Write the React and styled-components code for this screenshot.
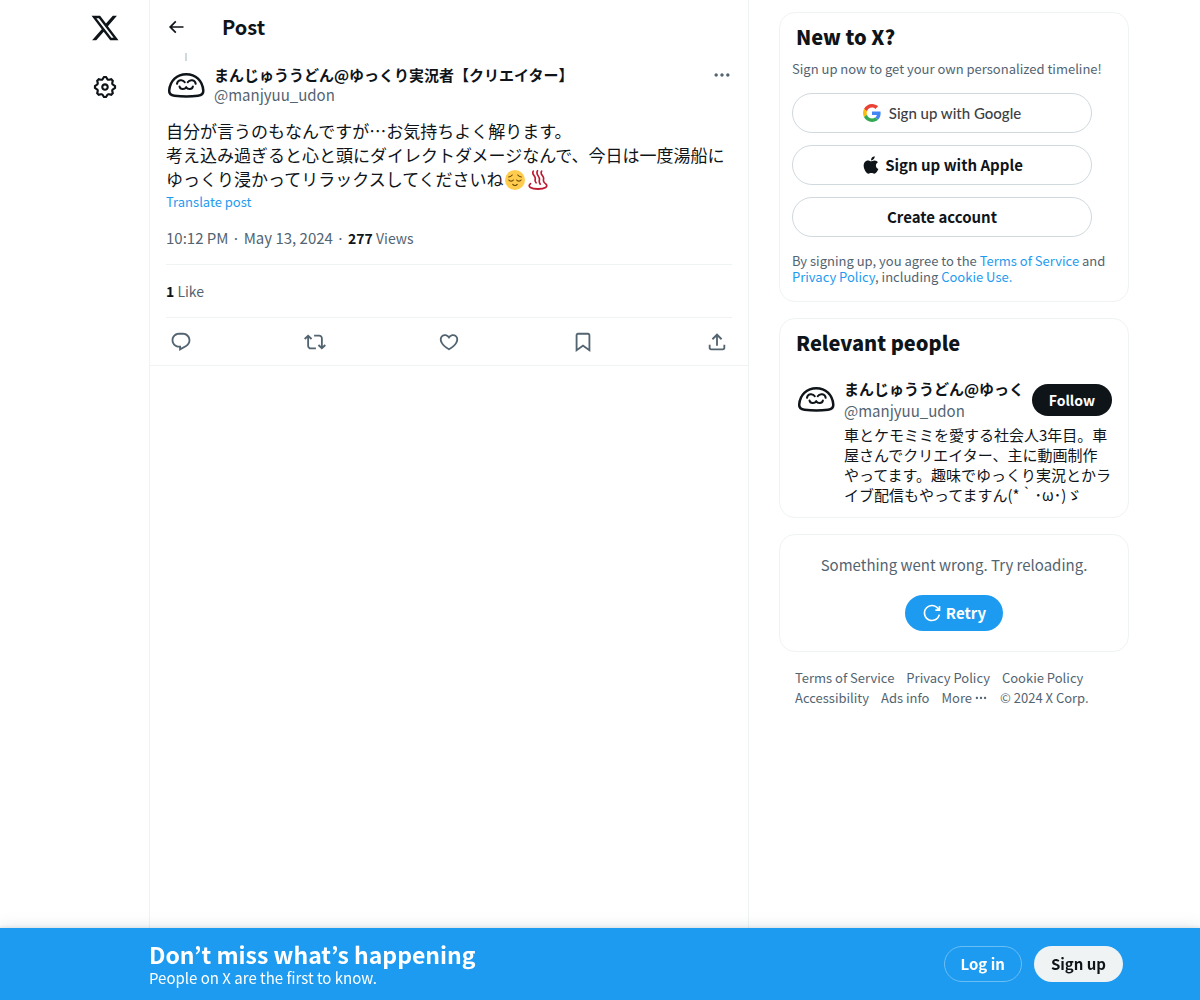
import React from "react";
import styled, { createGlobalStyle } from "styled-components";
import { FaApple } from "react-icons/fa";

const GlobalStyle = createGlobalStyle`
  * {
    box-sizing: border-box;
  }
  body {
    margin: 0;
    background-color: #fff;
    font-family: "Noto Sans CJK JP", "Noto Sans", sans-serif;
    font-size: 15px;
    line-height: 20px;
    color: #0f1419;
  }
  h1, h2, p, ul {
    margin: 0;
    padding: 0;
  }
  button {
    font-family: inherit;
    cursor: pointer;
  }
`;

const Page = styled.div`
  display: flex;
  max-width: 1058px;
  min-height: 100vh;
  margin: 0 auto;
`;

const SideNav = styled.nav`
  display: flex;
  flex-direction: column;
  align-items: center;
  gap: 9px;
  flex: 0 0 78px;
  padding: 3px 10px 0 0;
`;

const NavLink = styled.a`
  display: flex;
  align-items: center;
  justify-content: center;
  width: 50px;
  height: 50px;
  color: #0f1419;
`;

const Icon = styled.svg`
  display: block;
  flex: none;
  width: ${({ $size }) => $size}px;
  height: ${({ $size }) => $size}px;
  fill: currentColor;
`;

const Main = styled.main`
  flex: 0 1 600px;
  min-width: 0;
  border: solid #eff3f4;
  border-width: 0 1px;
`;

const Header = styled.header`
  display: flex;
  align-items: center;
  gap: 36px;
  height: 53px;
  padding: 0 16px;
`;

const PageTitle = styled.h1`
  font-size: 20px;
  line-height: 24px;
`;

const IconButton = styled.button`
  display: flex;
  align-items: center;
  justify-content: center;
  padding: 0;
  border: 0;
  background: none;
  color: ${({ $color }) => $color || "#536471"};
`;

const Post = styled.article`
  padding: 0 16px;
  border-bottom: 1px solid #eff3f4;
`;

const ThreadLine = styled.div`
  width: 2px;
  height: 8px;
  margin: 0 0 4px 19px;
  background-color: #cfd9de;
`;

const Author = styled.div`
  display: flex;
  align-items: flex-start;
  gap: 8px;
`;

const AuthorNames = styled.div`
  display: flex;
  flex-direction: column;
  gap: ${({ $gap }) => $gap || 0}px;
  flex: 1;
  min-width: 0;
`;

const Name = styled.a`
  overflow: hidden;
  color: #0f1419;
  font-weight: 700;
  text-decoration: none;
  white-space: nowrap;
`;

const Handle = styled.div`
  color: #536471;
`;

const PostText = styled.p`
  margin-top: 14px;
  font-size: 17px;
  line-height: 24px;
`;

const Emoji = styled.svg`
  width: 20px;
  height: 20px;
  margin: 0 2px 0 1px;
  vertical-align: -4px;
`;

const Translate = styled.button`
  display: block;
  margin-top: 1px;
  padding: 0;
  border: 0;
  background: none;
  color: #1d9bf0;
  font-size: 13px;
  line-height: 20px;
`;

const Meta = styled.div`
  padding: 16px 0;
  color: #536471;
`;

const Stats = styled(Meta)`
  border: solid #eff3f4;
  border-width: 1px 0;
`;

const Count = styled.span`
  font-size: 14px;

  strong {
    color: #0f1419;
  }
`;

const Actions = styled.div`
  display: flex;
  align-items: center;
  justify-content: space-between;
  height: 47px;
  padding: 0 4px;
`;

const Aside = styled.aside`
  flex: 0 1 350px;
  min-width: 0;
  margin-left: 30px;
  padding: 12px 0 90px;
`;

const Card = styled.section`
  margin-bottom: 16px;
  padding: ${({ $pad }) => $pad || "12px"};
  border: 1px solid #eff3f4;
  border-radius: 16px;
`;

const CardTitle = styled.h2`
  padding: 0 4px;
  font-size: 20px;
  font-weight: 900;
  line-height: 24px;
`;

const SmallText = styled.p`
  color: #536471;
  font-size: 13px;
  line-height: 16px;
`;

const Intro = styled(SmallText)`
  margin-top: 12px;
`;

const Link = styled.a`
  color: #1d9bf0;
  text-decoration: none;
`;

const SignUpOptions = styled.div`
  display: flex;
  flex-direction: column;
  gap: 12px;
  max-width: 300px;
  margin: 16px 0;
`;

const Pill = styled.button`
  display: flex;
  align-items: center;
  justify-content: center;
  gap: 4px;
  flex: none;
  height: ${({ $height }) => $height || 36}px;
  padding: 0 16px;
  border: 1px solid ${({ $border }) => $border || "transparent"};
  border-radius: 20px;
  background-color: ${({ $bg }) => $bg || "#fff"};
  color: ${({ $color }) => $color || "#0f1419"};
  font-size: 15px;
  font-weight: 700;
  line-height: 20px;
  white-space: nowrap;
`;

const GooglePill = styled(Pill)`
  gap: 8px;
  color: #3c4043;
  font-family: Lato, sans-serif;
  font-size: 15px;
  font-weight: 500;
`;

const FollowPill = styled(Pill)`
  font-size: 14px;
`;

const Person = styled.div`
  display: flex;
  align-items: flex-start;
  gap: 8px;
  margin-top: 24px;
  padding: 0 4px;
`;

const PersonBody = styled.div`
  flex: 1;
  min-width: 0;
`;

const PersonTop = styled.div`
  display: flex;
  align-items: center;
  justify-content: space-between;
  gap: 8px;
`;

const Bio = styled.p`
  margin-top: 4px;
`;

const ErrorBox = styled.div`
  display: flex;
  flex-direction: column;
  align-items: center;
  gap: 20px;
  color: #536471;
`;

const FooterLinks = styled.nav`
  display: flex;
  flex-wrap: wrap;
  column-gap: 12px;
  padding: 0 16px;
  color: #536471;
  font-size: 13px;
  line-height: 20px;

  a {
    color: inherit;
    text-decoration: none;
  }
`;

const MoreLink = styled.button`
  display: flex;
  align-items: center;
  gap: 2px;
  padding: 0;
  border: 0;
  background: none;
  color: inherit;
  font-size: 13px;
  line-height: 20px;
`;

const BottomBar = styled.div`
  position: fixed;
  right: 0;
  bottom: 0;
  left: 0;
  background-color: #1d9bf0;
  box-shadow: 0 0 15px rgba(101, 119, 134, 0.2), 0 0 3px 1px rgba(101, 119, 134, 0.15);
`;

const BottomInner = styled.div`
  display: flex;
  align-items: center;
  justify-content: space-between;
  max-width: 1058px;
  height: 72px;
  margin: 0 auto;
  padding: 0 6px 0 78px;
  color: #fff;
`;

const BottomTitle = styled.div`
  font-size: 23px;
  font-weight: 700;
  line-height: 28px;
`;

const BottomButtons = styled.div`
  display: flex;
  gap: 12px;
`;

const paths = {
  logo: "M18.244 2.25h3.308l-7.227 8.26 8.502 11.24H16.17l-5.214-6.817L4.99 21.75H1.68l7.73-8.835L1.254 2.25H8.08l4.713 6.231zm-1.161 17.52h1.833L7.084 4.126H5.117z",
  settings: "M10.54 1.75h2.92l1.57 2.36c.11.17.32.25.53.21l2.53-.59 2.17 2.17-.58 2.54c-.05.2.04.41.21.53l2.36 1.57v2.92l-2.36 1.57c-.17.12-.26.33-.21.53l.58 2.54-2.17 2.17-2.53-.59c-.21-.04-.42.04-.53.21l-1.57 2.36h-2.92l-1.58-2.36c-.11-.17-.32-.25-.52-.21l-2.54.59-2.17-2.17.58-2.54c.05-.2-.03-.41-.21-.53l-2.35-1.57v-2.92L4.1 8.97c.18-.12.26-.33.21-.53L3.73 5.9 5.9 3.73l2.54.59c.2.04.41-.04.52-.21l1.58-2.36zm1.07 2l-.98 1.47C10.05 6.08 9 6.5 7.99 6.27l-1.46-.34-.6.6.33 1.46c.24 1.01-.18 2.07-1.05 2.64l-1.46.98v.78l1.46.98c.87.57 1.29 1.63 1.05 2.64l-.33 1.46.6.6 1.46-.34c1.01-.23 2.06.19 2.64 1.05l.98 1.47h.78l.97-1.47c.58-.86 1.63-1.28 2.65-1.05l1.45.34.61-.6-.34-1.46c-.23-1.01.18-2.07 1.05-2.64l1.47-.98v-.78l-1.47-.98c-.87-.57-1.28-1.63-1.05-2.64l.34-1.46-.61-.6-1.45.34c-1.02.23-2.07-.19-2.65-1.05l-.97-1.47h-.78zM12 10.5c-.83 0-1.5.67-1.5 1.5s.67 1.5 1.5 1.5c.82 0 1.5-.67 1.5-1.5s-.68-1.5-1.5-1.5zM8.5 12c0-1.93 1.56-3.5 3.5-3.5 1.93 0 3.5 1.57 3.5 3.5s-1.57 3.5-3.5 3.5c-1.94 0-3.5-1.57-3.5-3.5z",
  back: "M7.414 13l5.043 5.04-1.414 1.42L3.586 12l7.457-7.46 1.414 1.42L7.414 11H21v2H7.414z",
  more: "M3 12c0-1.1.9-2 2-2s2 .9 2 2-.9 2-2 2-2-.9-2-2zm9 2c1.1 0 2-.9 2-2s-.9-2-2-2-2 .9-2 2 .9 2 2 2zm7 0c1.1 0 2-.9 2-2s-.9-2-2-2-2 .9-2 2 .9 2 2 2z",
  reply: "M1.751 10c0-4.42 3.584-8 8.005-8h4.366c4.49 0 8.129 3.64 8.129 8.13 0 2.96-1.607 5.68-4.196 7.11l-8.054 4.46v-3.69h-.067c-4.49.1-8.183-3.51-8.183-8.01zm8.005-6c-3.317 0-6.005 2.69-6.005 6 0 3.37 2.77 6.08 6.138 6.01l.351-.01h1.761v2.3l5.087-2.81c1.951-1.08 3.163-3.13 3.163-5.36 0-3.39-2.744-6.13-6.129-6.13H9.756z",
  repost: "M4.5 3.88l4.432 4.14-1.364 1.46L5.5 7.55V16c0 1.1.896 2 2 2H13v2H7.5c-2.209 0-4-1.79-4-4V7.55L1.432 9.48.068 8.02 4.5 3.88zM16.5 6H11V4h5.5c2.209 0 4 1.79 4 4v8.45l2.068-1.93 1.364 1.46-4.432 4.14-4.432-4.14 1.364-1.46 2.068 1.93V8c0-1.1-.896-2-2-2z",
  like: "M16.697 5.5c-1.222-.06-2.679.51-3.89 2.16l-.805 1.09-.806-1.09C9.984 6.01 8.526 5.44 7.304 5.5c-1.243.07-2.349.78-2.91 1.91-.552 1.12-.633 2.78.479 4.82 1.074 1.97 3.257 4.27 7.129 6.61 3.87-2.34 6.052-4.64 7.126-6.61 1.111-2.04 1.03-3.7.477-4.82-.561-1.13-1.666-1.84-2.908-1.91zm4.187 7.69c-1.351 2.48-4.001 5.12-8.379 7.67l-.503.3-.504-.3c-4.379-2.55-7.029-5.19-8.382-7.67-1.36-2.5-1.41-4.86-.514-6.67.887-1.79 2.647-2.91 4.601-3.01 1.651-.09 3.368.56 4.798 2.01 1.429-1.45 3.146-2.1 4.796-2.01 1.954.1 3.714 1.22 4.601 3.01.896 1.81.846 4.17-.514 6.67z",
  bookmark: "M4 4.5C4 3.12 5.119 2 6.5 2h11C18.881 2 20 3.12 20 4.5v18.44l-8-5.71-8 5.71V4.5zM6.5 4c-.276 0-.5.22-.5.5v14.56l6-4.29 6 4.29V4.5c0-.28-.224-.5-.5-.5h-11z",
  share: "M12 2.59l5.7 5.7-1.41 1.42L13 6.41V16h-2V6.41l-3.3 3.3-1.41-1.42L12 2.59zM21 15l-.02 3.51c0 1.38-1.12 2.49-2.5 2.49H5.5C4.11 21 3 19.88 3 18.5V15h2v3.5c0 .28.22.5.5.5h12.98c.28 0 .5-.22.5-.5L19 15h2z",
  retry: "M12 4c-4.418 0-8 3.58-8 8s3.582 8 8 8c3.806 0 6.993-2.66 7.802-6.22l1.95.44C20.742 18.67 16.76 22 12 22 6.477 22 2 17.52 2 12S6.477 2 12 2c3.272 0 6.176 1.57 8 4V3.500h2v6h-6v-2h2.616C17.175 5.390 14.749 4 12 4z",
};

const Glyph = ({ name, size }) => (
  <Icon $size={size} viewBox="0 0 24 24" aria-hidden="true">
    <path d={paths[name]} />
  </Icon>
);

const Avatar = () => (
  <Icon $size={40} viewBox="0 0 40 40" role="img" aria-label="まんじゅううどん">
    <g fill="none" stroke="#0f1419" strokeLinecap="round" strokeLinejoin="round">
      <path strokeWidth="2.500" d="M3.200 25.500C4 15.500 11 9.200 20.300 9.200S36.500 15.500 37.300 25.500c.2 3.400-1.800 4.800-5.300 5.200-7.500 1-15.500 1-23.500 0-3.500-.4-5.500-1.800-5.300-5.200z" />
      <path strokeWidth="2" d="M11 18.800c.5-4.200 5.800-4.800 7.800-1.600M21.700 17.200c2-3.200 7.500-2.600 8 1.600" />
      <path strokeWidth="2" d="M13.500 21.500c.8 3.300 5.200 3.400 6.700.6 1.500 2.800 5.900 2.700 6.700-.6" />
    </g>
  </Icon>
);

const GoogleLogo = () => (
  <Icon $size={18} viewBox="0 0 48 48" aria-hidden="true">
    <path fill="#EA4335" d="M24 9.500c3.540 0 6.710 1.220 9.210 3.600l6.850-6.850C35.900 2.380 30.470 0 24 0 14.620 0 6.510 5.380 2.560 13.220l7.980 6.190C12.430 13.720 17.740 9.500 24 9.500z" />
    <path fill="#4285F4" d="M46.980 24.550c0-1.570-.15-3.090-.38-4.550H24v9.020h12.940c-.58 2.960-2.260 5.480-4.780 7.180l7.730 6c4.510-4.180 7.090-10.360 7.090-17.650z" />
    <path fill="#FBBC05" d="M10.530 28.590c-.48-1.450-.76-2.990-.76-4.590s.27-3.140.76-4.590l-7.980-6.190C.92 16.460 0 20.120 0 24c0 3.880.92 7.540 2.560 10.780l7.970-6.190z" />
    <path fill="#34A853" d="M24 48c6.480 0 11.930-2.130 15.890-5.810l-7.730-6c-2.150 1.450-4.920 2.300-8.160 2.300-6.260 0-11.570-4.220-13.470-9.910l-7.980 6.190C6.510 42.620 14.620 48 24 48z" />
  </Icon>
);

const RelievedFace = () => (
  <Emoji viewBox="0 0 36 36" role="img" aria-label="relieved face">
    <circle cx="18" cy="18" r="18" fill="#ffcc4d" />
    <g fill="none" stroke="#664500" strokeWidth="2" strokeLinecap="round">
      <path d="M7 18c1.500 2.800 6.500 2.800 8 0M21 18c1.500 2.800 6.500 2.800 8 0" />
      <path d="M6.500 12.500c2.500-.3 5-1.600 6.500-3.500M29.500 12.500c-2.500-.3-5-1.600-6.500-3.500" />
      <path d="M14 26c2 2.600 6 2.600 8 0" />
    </g>
  </Emoji>
);

const HotSprings = () => (
  <Emoji viewBox="0 0 36 36" role="img" aria-label="hot springs">
    <g fill="none" stroke="#be1931" strokeLinecap="round">
      <path strokeWidth="3" d="M9.500 2c-4 6.500 5 8.500 3.500 14.500-.6 2.500-.3 4.500 1.500 6.500M17 1.500c-4 7.500 5 9.500 3.500 16.500-.6 3-.3 5 1.500 7.500M24.500 2c-4 6.500 5 8.500 3.500 14.500-.6 2.500-.3 4.500 1.500 6.500" />
      <path strokeWidth="3.200" d="M4.500 24.500C-2 30 6 34.200 18 34.200s20-4.200 13.500-9.700" />
    </g>
  </Emoji>
);

const actions = [
  { icon: "reply", label: "Reply" },
  { icon: "repost", label: "Repost" },
  { icon: "like", label: "Like" },
  { icon: "bookmark", label: "Bookmark" },
  { icon: "share", label: "Share post" },
];

export default function App() {
  return (
    <>
      <GlobalStyle />
      <Page>
        <SideNav aria-label="Primary">
          <NavLink href="#home" aria-label="X"><Glyph name="logo" size={30} /></NavLink>
          <NavLink href="#settings" aria-label="Settings"><Glyph name="settings" size={26} /></NavLink>
        </SideNav>

        <Main>
          <Header>
            <IconButton $color="#0f1419" aria-label="Back"><Glyph name="back" size={20} /></IconButton>
            <PageTitle>Post</PageTitle>
          </Header>
          <Post>
            <ThreadLine />
            <Author>
              <Avatar />
              <AuthorNames>
                <Name href="#profile" lang="ja">まんじゅううどん@ゆっくり実況者【クリエイター】</Name>
                <Handle>@manjyuu_udon</Handle>
              </AuthorNames>
              <IconButton aria-label="More"><Glyph name="more" size={20} /></IconButton>
            </Author>
            <PostText lang="ja">
              自分が言うのもなんですが…お気持ちよく解ります。<br />
              考え込み過ぎると心と頭にダイレクトダメージなんで、今日は一度湯船にゆっくり浸かってリラックスしてくださいね<RelievedFace /><HotSprings />
            </PostText>
            <Translate>Translate post</Translate>
            <Meta>10:12 PM · May 13, 2024 · <Count><strong>277</strong> Views</Count></Meta>
            <Stats><Count><strong>1</strong> Like</Count></Stats>
            <Actions>
              {actions.map(({ icon, label }) => (
                <IconButton key={icon} aria-label={label}><Glyph name={icon} size={22} /></IconButton>
              ))}
            </Actions>
          </Post>
        </Main>

        <Aside>
          <Card $pad="12px 12px 16px">
            <CardTitle>New to X?</CardTitle>
            <Intro>Sign up now to get your own personalized timeline!</Intro>
            <SignUpOptions>
              <GooglePill $height={40} $border="#cfd9de"><GoogleLogo />Sign up with Google</GooglePill>
              <Pill $height={40} $border="#cfd9de"><FaApple size={20} />Sign up with Apple</Pill>
              <Pill $height={40} $border="#cfd9de">Create account</Pill>
            </SignUpOptions>
            <SmallText>
              By signing up, you agree to the <Link href="#terms">Terms of Service</Link> and{" "}
              <Link href="#privacy">Privacy Policy</Link>, including <Link href="#cookies">Cookie Use.</Link>
            </SmallText>
          </Card>

          <Card>
            <CardTitle>Relevant people</CardTitle>
            <Person>
              <Avatar />
              <PersonBody>
                <PersonTop>
                  <AuthorNames $gap={2}>
                    <Name href="#profile" lang="ja">まんじゅううどん@ゆっくり実況者【クリエイター】</Name>
                    <Handle>@manjyuu_udon</Handle>
                  </AuthorNames>
                  <FollowPill $height={32} $bg="#0f1419" $color="#fff">Follow</FollowPill>
                </PersonTop>
                <Bio lang="ja">車とケモミミを愛する社会人3年目。車屋さんでクリエイター、主に動画制作やってます。趣味でゆっくり実況とかライブ配信もやってますん(*｀･ω･)ゞ</Bio>
              </PersonBody>
            </Person>
          </Card>

          <Card $pad="20px">
            <ErrorBox>
              <p>Something went wrong. Try reloading.</p>
              <Pill $bg="#1d9bf0" $color="#fff"><Glyph name="retry" size={20} />Retry</Pill>
            </ErrorBox>
          </Card>

          <FooterLinks aria-label="Footer">
            <a href="#terms">Terms of Service</a>
            <a href="#privacy">Privacy Policy</a>
            <a href="#cookies">Cookie Policy</a>
            <a href="#accessibility">Accessibility</a>
            <a href="#ads">Ads info</a>
            <MoreLink>More <Glyph name="more" size={14} /></MoreLink>
            <span>© 2024 X Corp.</span>
          </FooterLinks>
        </Aside>
      </Page>

      <BottomBar>
        <BottomInner>
          <div>
            <BottomTitle>Don’t miss what’s happening</BottomTitle>
            <div>People on X are the first to know.</div>
          </div>
          <BottomButtons>
            <Pill $bg="#1d9bf0" $color="#fff" $border="#6bbef5">Log in</Pill>
            <Pill $bg="#eff3f4">Sign up</Pill>
          </BottomButtons>
        </BottomInner>
      </BottomBar>
    </>
  );
}
